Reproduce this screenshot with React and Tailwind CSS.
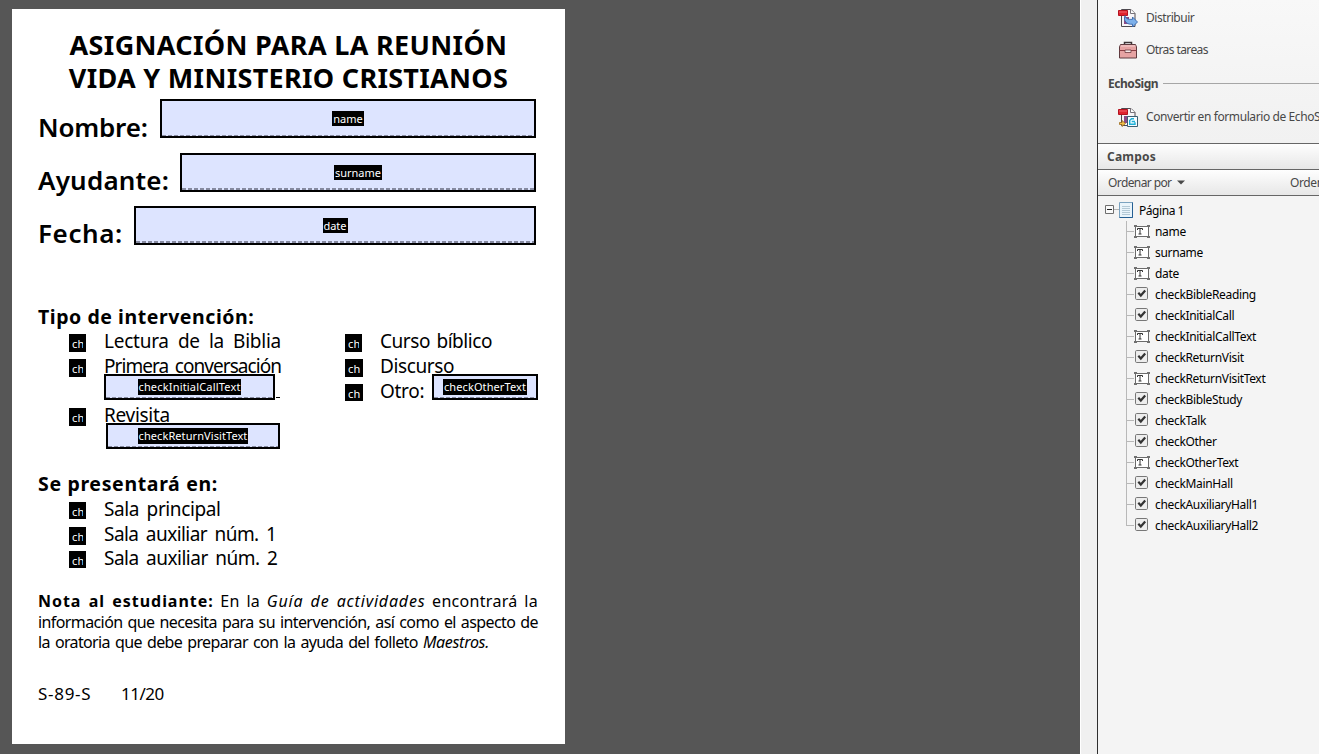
function Badge({ children, className = "" }) {
  return (
    <span className={`flex items-center justify-center bg-black text-[11px] leading-[15px] text-white whitespace-nowrap ${className}`}>
      {children}
    </span>
  );
}

function Field({ label, className = "", badge, thick }) {
  return (
    <div className={`relative flex flex-col border-2 border-black bg-[#dde4ff] ${className}`}>
      <div className="flex min-h-0 flex-1 items-center justify-center">
        <Badge className={badge}>{label}</Badge>
      </div>
      <div
        className={`-mt-px shrink-0 bg-[repeating-linear-gradient(90deg,#868aa0_0_4px,#dde4ff_4px_6px)] ${thick ? "h-[2px]" : "h-px"}`}
      />
    </div>
  );
}

function Check({ children, text = "", box = "h-[18px]", wide }) {
  return (
    <div className="flex h-full items-start">
      <span
        className={`mt-[5px] shrink-0 overflow-hidden bg-black pt-[2px] pl-[3px] text-[11px] leading-[15px] text-white ${wide ? "mr-[17px] w-[18px]" : "mr-[18px] w-[17px]"} ${box}`}
      >
        <span className={`block overflow-hidden tracking-[0.3px] ${wide ? "w-[14px]" : "w-[11px]"}`}>ch</span>
      </span>
      <span className={`text-[19px] leading-[24px] whitespace-nowrap ${text}`}>{children}</span>
    </div>
  );
}

function FormPage() {
  return (
    <div className="h-[735px] w-[553px] shrink-0 bg-white pt-[19px] pl-[26px] text-black">
      <h1 className="flex h-[66px] w-[501px] flex-col items-center text-[27px] leading-[33px] font-bold whitespace-nowrap">
        <span className="tracking-[0.33px]">ASIGNACIÓN PARA LA REUNIÓN</span>
        <span className="tracking-[0.3px]">VIDA Y MINISTERIO CRISTIANOS</span>
      </h1>

      <div className="mt-[5px] flex w-[498px] flex-col gap-[15px] text-[26px] leading-[39px] font-semibold">
        <div className="flex h-[39px] justify-between">
          <span className="mt-[9px] tracking-[-0.2px]">Nombre:</span>
          <Field label="name" className="w-[376px] font-normal" badge="h-[15px] w-[32px]" />
        </div>
        <div className="flex h-[39px] justify-between">
          <span className="mt-[8px] tracking-[0.2px]">Ayudante:</span>
          <Field label="surname" className="w-[356px] font-normal" badge="h-[15px] w-[48px]" thick />
        </div>
        <div className="-mt-px flex h-[39px] justify-between">
          <span className="mt-[8px] tracking-[0.6px]">Fecha:</span>
          <Field label="date" className="w-[402px] font-normal" badge="h-[15px] w-[25px]" thick />
        </div>
      </div>

      <h2 className="mt-[59px] h-[25px] text-[19.500px] leading-[25px] font-bold tracking-[0.55px]">Tipo de intervención:</h2>
      <div className="flex pl-[31px]">
        <div className="w-[276px]">
          <div className="h-[25px]">
            <Check text="w-[177px] [text-align-last:justify] tracking-[-0.25px]">Lectura de la Biblia</Check>
          </div>
          <div className="h-[25px]">
            <Check text="w-[177px] [text-align-last:justify] text-[18.500px] tracking-[-0.95px]">Primera conversación</Check>
          </div>
          <div className="-mt-[5px] ml-[35px] flex h-[26px] items-end">
            <Field label="checkInitialCallText" className="h-[26px] w-[171px]" badge="h-[16px] w-[103px] pb-px tracking-[0.18px]" />
            <span className="mb-[2px] ml-px h-px w-[4px] bg-black" />
          </div>
          <div className="mt-[3px] h-[25px]">
            <Check text="tracking-[-0.3px]">Revisita</Check>
          </div>
          <Field label="checkReturnVisitText" className="-mt-[5px] ml-[37px] h-[26px] w-[174px]" badge="h-[16px] w-[110px] pb-px tracking-[0.08px]" />
        </div>
        <div>
          <div className="h-[25px]">
            <Check text="tracking-[-0.45px] [word-spacing:2px]">Curso bíblico</Check>
          </div>
          <div className="h-[25px]">
            <Check text="tracking-[-0.4px]" wide>Discurso</Check>
          </div>
          <div className="flex h-[25px]">
            <Check text="w-[52px] tracking-[-0.3px]" box="h-[17px]" wide>Otro:</Check>
            <Field label="checkOtherText" className="-mt-[5px] h-[26px] w-[106px]" badge="h-[16px] w-[84px] pb-px tracking-[0.1px]" />
          </div>
        </div>
      </div>

      <h2 className="mt-[22px] h-[26px] text-[19.500px] leading-[25px] font-bold tracking-[0.65px]">Se presentará en:</h2>
      <div className="pl-[31px]">
        <div className="h-[25px]">
          <Check text="tracking-[-0.4px] [word-spacing:3px]" box="h-[17px]">Sala principal</Check>
        </div>
        <div className="h-[24px]">
          <Check text="tracking-[-0.55px] [word-spacing:3px]">Sala auxiliar núm. 1</Check>
        </div>
        <div className="h-[25px]">
          <Check text="tracking-[-0.5px] [word-spacing:3px]" box="h-[17px]">Sala auxiliar núm. 2</Check>
        </div>
      </div>

      <div className="mt-[20px] w-[500px] text-[16px] leading-[20.5px] whitespace-nowrap">
        <p className="tracking-[0.3px] [text-align-last:justify]">
          <b className="font-bold tracking-[0.95px]">Nota al estudiante:</b> En la <i className="tracking-[0.8px]">Guía de actividades</i> encontrará la
        </p>
        <p className="tracking-[-0.6px] [text-align-last:justify]">
          información que necesita para su intervención, así como el aspecto de
        </p>
        <p className="w-[451px] tracking-[-0.65px] [text-align-last:justify]">
          la oratoria que debe preparar con la ayuda del folleto <i className="tracking-[-0.3px]">Maestros.</i>
        </p>
      </div>

      <div className="mt-[29px] flex text-[17px] leading-[23px]">
        <span className="w-[83px] tracking-[0.7px]">S-89-S</span>
        <span className="tracking-[-0.5px]">11/20</span>
      </div>
    </div>
  );
}

function PdfSheet() {
  return (
    <>
      <path d="M3.500 1.500h9.500l4 4v13h-13.500z" fill="#f7f5f8" stroke="#4e4a50" />
      <path d="M12.500 1.500v4h4.500" fill="#fff" stroke="#77737a" />
      <path d="M6 9h5v7H6z" fill="#8a4a86" />
      <path d="M.500 2.500h9v5h-9z" fill="#e0222e" stroke="#b5121f" />
      <path d="M1 4h8" stroke="#f0656c" />
    </>
  );
}

function DistributeIcon() {
  return (
    <svg width="20" height="20" viewBox="0 0 20 20" className="shrink-0">
      <PdfSheet />
      <path d="M7 7.500c.5 3 3 4.300 7.500 3.800v-2.300l5 5-5 5v-2.800c-5.500.6-9.500-3-7.500-8.700z" fill="#7db0ea" stroke="#3566ad" strokeWidth=".9" />
    </svg>
  );
}

function EchoIcon() {
  return (
    <svg width="20" height="20" viewBox="0 0 20 20" className="shrink-0">
      <PdfSheet />
      <path d="M9.500 9.500h10v10h-10z" fill="#f4fcff" stroke="#3c5f72" />
      <path d="M16 11.700h-2.500l-1.800 1.800v3.800h5.300v-2M13.700 14.500h3.300" fill="none" stroke="#1eb0d8" strokeWidth="1.400" />
      <path d="M1.500 15.500h2.500v-2l3.500 3-3.500 3v-2h-2.500z" fill="#f2c04a" stroke="#98671b" strokeWidth=".8" />
    </svg>
  );
}

function CaseIcon() {
  return (
    <svg width="20" height="20" viewBox="0 0 20 20" className="shrink-0">
      <path d="M6.500 4v-1.500h7v1.500" fill="none" stroke="#3c3436" strokeWidth="1.500" />
      <path d="M2.500 4.500h15l1 2.500v11h-17v-11z" fill="#e6a3a3" stroke="#5f3a3e" />
      <path d="M2.500 6h15" stroke="#f6d2d2" />
      <path d="M1.500 10.500h17" stroke="#8a3f45" />
      <path d="M7 10h6v2.500h-6z" fill="#f7eaea" stroke="#6c3b40" strokeWidth=".8" />
    </svg>
  );
}

function TextFieldIcon() {
  return (
    <svg width="16" height="13" viewBox="0 0 16 13" className="mt-[4px] shrink-0">
      <path d="M1.500 1.500h13v10h-13z" fill="#fff" stroke="#6b6b6b" />
      <path d="M0 0h3v2H0zM13 0h3v2h-3zM0 11h3v2H0zM13 11h3v2h-3z" fill="#707070" />
      <path d="M3.500 5V3.500h5V5M6 3.500v5.500M4.500 9h3" fill="none" stroke="#333" />
    </svg>
  );
}

function CheckIcon() {
  return (
    <svg width="16" height="14" viewBox="0 0 16 14" className="mt-[3px] shrink-0">
      <rect x="1.500" y=".5" width="12" height="12" rx="1.200" fill="#ededed" stroke="#777" />
      <path d="M4.300 5.800l2.500 2.700 4.400-5" fill="none" stroke="#333" strokeWidth="2.200" />
    </svg>
  );
}

const fields = [
  ["name", "text"],
  ["surname", "text"],
  ["date", "text"],
  ["checkBibleReading", "check"],
  ["checkInitialCall", "check"],
  ["checkInitialCallText", "text"],
  ["checkReturnVisit", "check"],
  ["checkReturnVisitText", "text"],
  ["checkBibleStudy", "check"],
  ["checkTalk", "check"],
  ["checkOther", "check"],
  ["checkOtherText", "text"],
  ["checkMainHall", "check"],
  ["checkAuxiliaryHall1", "check"],
  ["checkAuxiliaryHall2", "check"],
];

function Tree() {
  return (
    <div className="pt-[4px] pl-[7px] text-[12px] leading-[21px] tracking-[-0.33px] text-black">
      <div className="flex h-[21px] items-start">
        <svg width="14" height="21" viewBox="0 0 14 21" className="shrink-0">
          <path d="M.5 5.500h8v8h-8z" fill="#fafafa" stroke="#6e6e6e" />
          <path d="M2 9.500h5" stroke="#222" />
          <path d="M9 9.500h5" stroke="#b4b4b4" />
        </svg>
        <svg width="14" height="16" viewBox="0 0 14 16" className="mt-[2px] shrink-0">
          <path d="M.5.500h13v15H.500z" fill="#e9f4fb" stroke="#7ba3c0" />
          <path d="M.5 15.500h13V.500" fill="none" stroke="#255f93" />
          <path d="M3 4.500h8M3 6.500h8M3 8.500h8M3 10.500h8M3 12.500h8" stroke="#b3c9d6" />
        </svg>
        <span className="ml-[6px] tracking-[-0.45px]">Página 1</span>
      </div>
      {fields.map(([name, kind], i) => (
        <div key={name} className="flex h-[21px] items-start pl-[21px]">
          <span className={`w-px shrink-0 bg-[#b8b8b8] ${i === fields.length - 1 ? "h-[11px]" : "h-[21px]"}`} />
          <span className="mt-[10px] h-px w-[7px] shrink-0 bg-[#b8b8b8]" />
          {kind === "text" ? <TextFieldIcon /> : <CheckIcon />}
          <span className="ml-[5px]">{name}</span>
        </div>
      ))}
    </div>
  );
}

function Sidebar() {
  return (
    <aside className="flex min-w-0 flex-1 flex-col overflow-hidden border-l border-[#2e2e2e] bg-[#f4f4f4] text-[12px] whitespace-nowrap text-[#484848]">
      <div className="h-[143px] shrink-0 bg-linear-to-b from-[#f8f8f8] to-[#f1f1f1] pl-[20px]">
        <div className="flex h-[34px] items-center gap-[8px] pt-[2px] tracking-[-0.45px]">
          <DistributeIcon />
          Distribuir
        </div>
        <div className="flex h-[32px] items-center gap-[8px] tracking-[-0.6px]">
          <CaseIcon />
          Otras tareas
        </div>
        <div className="-ml-[10px] flex h-[34px] items-center gap-[5px] pt-[2px]">
          <b className="tracking-[-0.45px]">EchoSign</b>
          <span className="-mt-px h-px flex-1 bg-[#a6a6a6]" />
        </div>
        <div className="flex h-[34px] items-center gap-[8px] tracking-[-0.4px]">
          <EchoIcon />
          Convertir en formulario de EchoSign
        </div>
      </div>
      <div className="flex h-[26px] shrink-0 items-center border-t border-[#666] bg-linear-to-b from-[#fefefe] to-[#e7e7e7] pl-[9px] font-bold tracking-[0.2px]">
        Campos
      </div>
      <div className="flex h-[27px] shrink-0 items-center border-y border-[#666] bg-linear-to-b from-[#fefefe] to-[#e7e7e7] pl-[10px]">
        <span className="w-[69px] shrink-0 tracking-[-0.6px]">Ordenar por</span>
        <svg width="8" height="5" viewBox="0 0 8 5" className="shrink-0">
          <path d="M0 .5h8L4 4.500z" fill="#484848" />
        </svg>
        <span className="ml-[105px] tracking-[-0.4px]">Orden</span>
      </div>
      <Tree />
    </aside>
  );
}

export default function App() {
  return (
    <div className="flex h-[754px] w-[1319px] overflow-hidden font-['Noto_Sans',sans-serif]">
      <main className="w-[1080px] shrink-0 bg-[#565656] pt-[9px] pl-[12px]">
        <FormPage />
      </main>
      <div className="w-[17px] shrink-0 border-l border-white bg-[#f0f0f0]" />
      <Sidebar />
    </div>
  );
}
